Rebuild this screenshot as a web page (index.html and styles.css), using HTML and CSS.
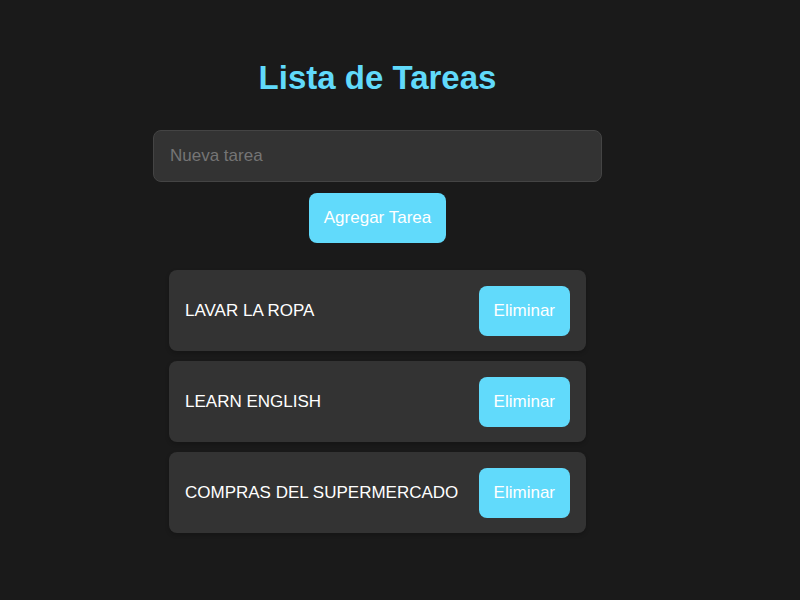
FILE: index.html
```html
<!DOCTYPE html>
<html lang="es">
<head>
<meta charset="utf-8">
<meta name="viewport" content="width=device-width, initial-scale=1">
<title>Lista de Tareas</title>
<link rel="stylesheet" href="styles.css">
</head>
<body>
<main class="app">
  <h1 class="title">Lista de Tareas</h1>
  <form class="task-form">
    <input class="task-input" type="text" placeholder="Nueva tarea" aria-label="Nueva tarea">
    <button class="button" type="submit">Agregar Tarea</button>
  </form>
  <ul class="task-list">
    <li class="task"><span>LAVAR LA ROPA</span><button class="button" type="button">Eliminar</button></li>
    <li class="task"><span>LEARN ENGLISH</span><button class="button" type="button">Eliminar</button></li>
    <li class="task"><span>COMPRAS DEL SUPERMERCADO</span><button class="button" type="button">Eliminar</button></li>
  </ul>
</main>
</body>
</html>
```

FILE: styles.css
```css
* {
  box-sizing: border-box;
}

body {
  margin: 0;
  padding: 58px 45px 58px 0;
  background: #1a1a1a;
  color: #fff;
  font-family: "Liberation Sans", Arial, sans-serif;
  font-size: 17px;
}

.app {
  width: 100%;
  max-width: 449px;
  margin: 0 auto;
}

.title {
  margin: 0 0 32px;
  color: #61dafb;
  font-size: 33px;
  line-height: 40px;
  text-align: center;
}

.task-form {
  display: flex;
  flex-direction: column;
  align-items: center;
  gap: 11px;
}

.task-input {
  width: 100%;
  height: 52px;
  padding: 0 16px;
  border: 1px solid #444;
  border-radius: 8px;
  background: #333;
  color: #fff;
  font: inherit;
}

.task-input::placeholder {
  color: #757575;
}

.button {
  height: 50px;
  padding: 0 15px;
  border: 0;
  border-radius: 8px;
  background: #61dafb;
  color: #fff;
  font: inherit;
  cursor: pointer;
}

.task-list {
  display: flex;
  flex-direction: column;
  gap: 10px;
  margin: 27px 0 0;
  padding: 0 16px;
  list-style: none;
}

.task {
  display: flex;
  align-items: center;
  justify-content: space-between;
  padding: 16px 16px 15px;
  border-radius: 8px;
  background: #333;
  box-shadow: 0 2px 4px rgba(0, 0, 0, 0.2);
}
```
